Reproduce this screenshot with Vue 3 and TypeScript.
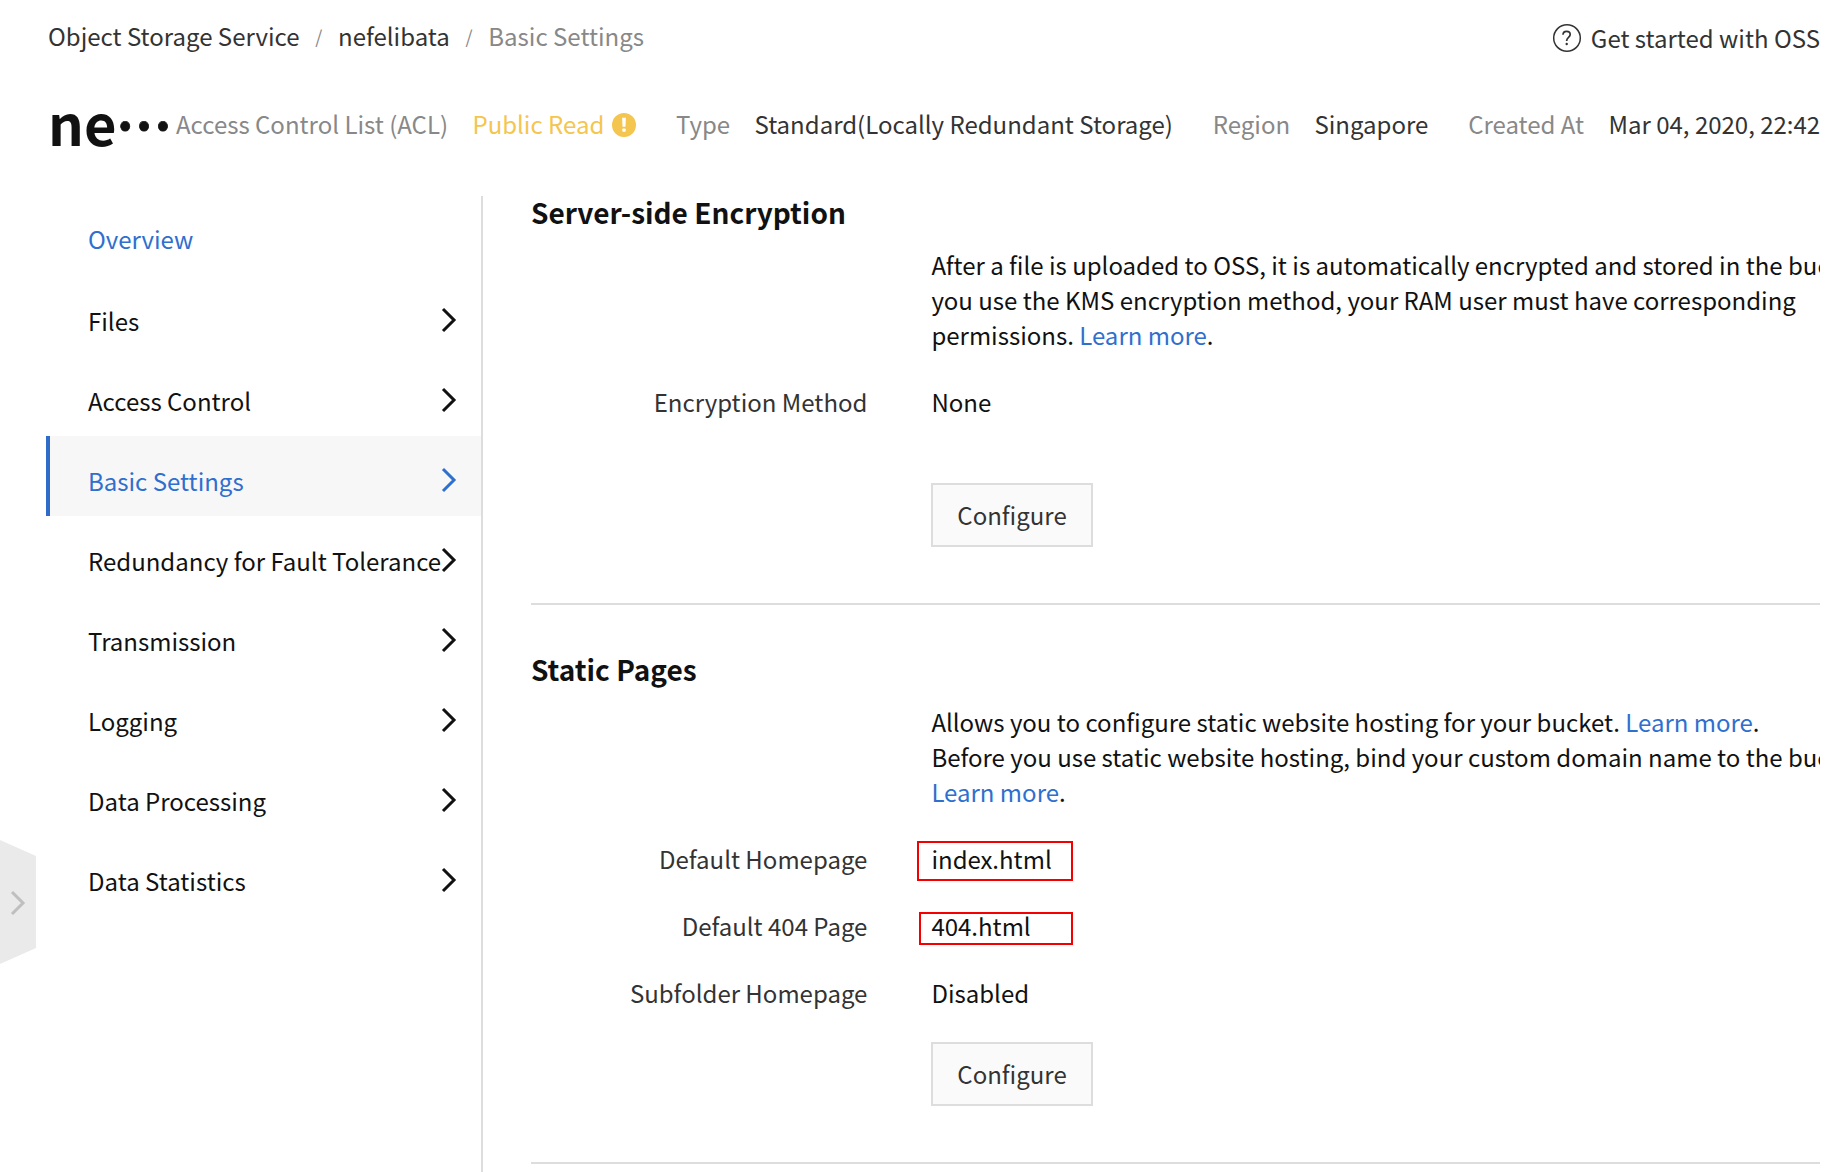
<script setup lang="ts">
interface MenuItem {
  label: string
  kind?: 'link' | 'active'
}

const menu: MenuItem[] = [
  { label: 'Overview', kind: 'link' },
  { label: 'Files' },
  { label: 'Access Control' },
  { label: 'Basic Settings', kind: 'active' },
  { label: 'Redundancy for Fault Tolerance' },
  { label: 'Transmission' },
  { label: 'Logging' },
  { label: 'Data Processing' },
  { label: 'Data Statistics' },
]
</script>

<template>
  <div class="page">
    <div class="clip">
      <header class="topbar">
        <nav class="crumbs">
          <a>Object Storage Service</a>
          <span class="slash">/</span>
          <a>nefelibata</a>
          <span class="slash">/</span>
          <span class="current">Basic Settings</span>
        </nav>
        <a class="help">
          <svg width="30" height="30" viewBox="0 0 30 30" fill="none" stroke="#333">
            <circle cx="15" cy="15" r="13.3" stroke-width="1.5" />
            <path d="M11 11.8c0-2.2 1.5-3.5 3.6-3.5s3.6 1.3 3.6 3.2c0 2.6-3.5 3-3.5 6v.6" stroke-width="1.7" />
            <circle cx="14.7" cy="21" r="1.2" fill="#333" stroke="none" />
          </svg>
          <span>Get started with OSS</span>
        </a>
      </header>

      <div class="info">
        <h1>ne<span class="dots">…</span></h1>
        <span class="key acl">Access Control List (ACL)</span>
        <span class="warn">Public Read</span>
        <svg class="warn-icon" width="24" height="24" viewBox="0 0 24 24">
          <circle cx="12" cy="12" r="12" fill="#f4c54f" />
          <path d="M10.1 4.8h3.8l-.4 9h-3z" fill="#fff" />
          <rect x="10.3" y="15.4" width="3.4" height="3.4" rx=".8" fill="#fff" />
        </svg>
        <span class="key type">Type</span>
        <span class="val">Standard(Locally Redundant Storage)</span>
        <span class="key">Region</span>
        <span class="val">Singapore</span>
        <span class="key">Created At</span>
        <span class="val">Mar 04, 2020, 22:42</span>
      </div>

      <div class="body">
        <aside class="sidebar">
          <a v-for="item in menu" :key="item.label" class="item" :class="item.kind">
            <span>{{ item.label }}</span>
            <svg v-if="item.kind !== 'link'" width="16" height="26" viewBox="0 0 16 26" fill="none" stroke="currentColor" stroke-width="3">
              <path d="M2 2l11 11L2 24" />
            </svg>
          </a>
        </aside>

        <main class="main">
          <section>
            <h2>Server-side Encryption</h2>
            <p class="desc">
              After a file is uploaded to OSS, it is automatically encrypted and stored in the bucket. If<br />
              you use the KMS encryption method, your RAM user must have corresponding<br />
              permissions. <a>Learn more</a>.
            </p>
            <div class="row"><label>Encryption Method</label><span class="value">None</span></div>
            <button class="spaced">Configure</button>
          </section>
          <section>
            <h2>Static Pages</h2>
            <p class="desc">
              Allows you to configure static website hosting for your bucket. <a>Learn more</a>.<br />
              Before you use static website hosting, bind your custom domain name to the bucket.<br />
              <a>Learn more</a>.
            </p>
            <div class="row"><label>Default Homepage</label><span class="value">index.html<i class="mark home"></i></span></div>
            <div class="row"><label>Default 404 Page</label><span class="value">404.html<i class="mark missing"></i></span></div>
            <div class="row"><label>Subfolder Homepage</label><span class="value">Disabled</span></div>
            <button>Configure</button>
          </section>
        </main>
      </div>
    </div>

    <div class="drawer">
      <svg width="36" height="124" viewBox="0 0 36 124">
        <path d="M0 0l36 16v92L0 124z" fill="#eaeaea" />
        <path d="M12 52l11 11-11 11" fill="none" stroke="#bfbfbf" stroke-width="3" />
      </svg>
    </div>
  </div>
</template>

<style>
body {
  background: #fff;
  overflow: hidden;
}
</style>

<style scoped>
.page {
  position: relative;
  width: 1848px;
  height: 1172px;
  overflow: hidden;
  font-family: "Noto Sans CJK SC", "Noto Sans", sans-serif;
  font-size: 24px;
  line-height: 36px;
  color: #111;
  white-space: nowrap;
}
.clip {
  width: 1820px;
  height: 1172px;
  overflow: hidden;
}
h1, h2, p {
  margin: 0;
}
.topbar {
  display: flex;
  justify-content: space-between;
  height: 82px;
  padding-left: 48px;
}
.crumbs {
  display: flex;
  padding-top: 18px;
  color: #333;
}
.slash {
  width: 38.5px;
  text-align: center;
  font-size: 18px;
  color: #888;
}
.current {
  color: #888;
}
.help {
  display: flex;
  padding-top: 20px;
  color: #333;
}
.help svg {
  margin: 3px 9px 0 0;
}
.info {
  display: flex;
  height: 114px;
  padding-left: 48px;
}
.info > * {
  flex: none;
}
.info > span {
  margin-top: 24px;
}
h1 {
  width: 128px;
  font-size: 56px;
  line-height: 80px;
  font-weight: 700;
}
.dots {
  margin-left: -0.5px;
  font-size: 50px;
  line-height: 0;
  vertical-align: 16.5px;
  -webkit-text-stroke: 0.8px #111;
}
.key {
  color: #888;
  margin-right: 24.4px;
}
.val {
  color: #333;
  margin-right: 39.8px;
}
.warn {
  color: #f4c54f;
}
.warn-icon {
  margin: 31px 39.7px 0 7.9px;
}
.body {
  display: flex;
  height: 976px;
}
.sidebar {
  width: 435px;
  flex: none;
  margin-left: 46px;
  border-right: 2px solid #ddd;
}
.item {
  display: flex;
  align-items: center;
  justify-content: space-between;
  box-sizing: border-box;
  height: 80px;
  padding: 8px 24px 0 42px;
}
.item span {
  width: 353px;
  padding-top: 2px;
}
.item svg {
  flex: none;
}
.item.link {
  padding-top: 3px;
  color: #2f6fce;
}
.item.active {
  padding-left: 38px;
  border-left: 4px solid #2f6bc8;
  background: #f7f7f7;
  color: #2f6fce;
}
.main {
  flex: 1;
  min-width: 0;
  padding-left: 48px;
}
section {
  padding-bottom: 56px;
  border-bottom: 2px solid #ddd;
  margin-bottom: 48px;
}
h2 {
  font-size: 28px;
  line-height: 32px;
  font-weight: 700;
}
.desc {
  margin: 19px 0 32px 400.4px;
  line-height: 35px;
}
.desc a {
  color: #2f6fce;
}
.row {
  display: flex;
  gap: 64px;
  margin-bottom: 31px;
}
.row label {
  width: 336.4px;
  text-align: right;
  color: #333;
}
.value {
  position: relative;
}
button {
  display: block;
  box-sizing: border-box;
  width: 162px;
  height: 64px;
  margin: 0 0 0 400px;
  padding: 0;
  border: 2px solid #ddd;
  background: #fafafa;
  font: inherit;
  color: #333;
}
button.spaced {
  margin-top: 63px;
}
.mark {
  position: absolute;
  box-sizing: border-box;
  border: 2px solid #f50000;
}
.home {
  left: -14px;
  top: 0;
  width: 156px;
  height: 40px;
}
.missing {
  left: -12px;
  top: 4px;
  width: 154px;
  height: 33px;
}
.drawer {
  position: absolute;
  left: 0;
  top: 840px;
  height: 124px;
}
</style>
